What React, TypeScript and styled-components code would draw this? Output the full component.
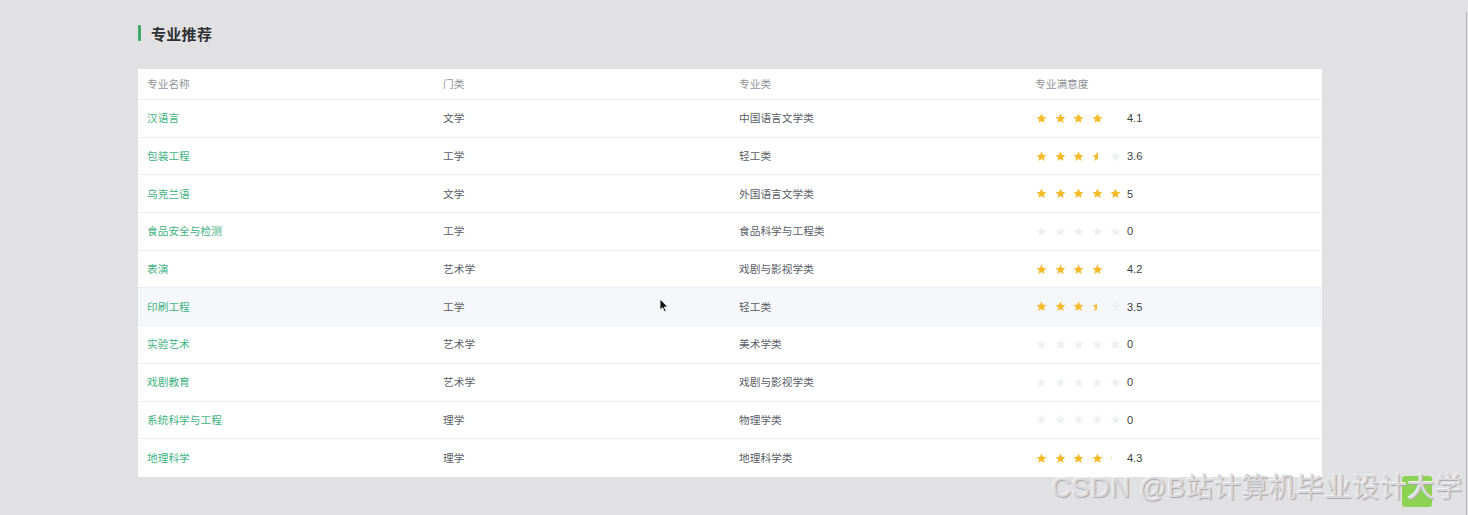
import React from "react";
import styled, { createGlobalStyle } from "styled-components";

const GlobalStyle = createGlobalStyle`
  html, body { margin: 0; padding: 0; }
  body {
    background: #e1e0e2;
    font-family: "Liberation Sans", "Noto Sans CJK SC", sans-serif;
    width: 1468px;
    height: 515px;
    overflow: hidden;
  }
`;

const Page = styled.div`
  position: relative;
  width: 1468px;
  height: 515px;
  box-sizing: border-box;
  padding: 25px 146px 0 138px;
`;

const TitleRow = styled.div`
  display: flex;
  align-items: center;
  gap: 10px;
  height: 16px;
  margin-bottom: 28px;
`;

const TitleBar = styled.span`
  display: block;
  width: 3px;
  height: 16px;
  background: #3daa6c;
  border-radius: 1px;
`;

const TitleText = styled.h2`
  margin: 0;
  font-size: 15px;
  font-weight: 700;
  color: #303133;
  letter-spacing: 0.3px;
`;

const Table = styled.div`
  background: #fff;
  width: 1184px;
`;

const Row = styled.div<{ $head?: boolean; $hover?: boolean }>`
  display: grid;
  grid-template-columns: repeat(4, 1fr);
  align-items: center;
  height: ${(p) => (p.$head ? "31px" : "37.7px")};
  box-sizing: border-box;
  border-bottom: 1px solid #ebeef5;
  background: ${(p) => (p.$hover ? "#f5f7fa" : "#fff")};
  &:last-child { border-bottom: none; }
`;

const Cell = styled.div<{ $tone?: "head" | "name" | "body" }>`
  padding-left: 9px;
  font-size: 10.7px;
  line-height: 14px;
  white-space: nowrap;
  color: ${(p) =>
    p.$tone === "head" ? "#909399" : p.$tone === "name" ? "#3fb37f" : "#5a5e66"};
`;

const RateWrap = styled.div`
  display: flex;
  align-items: center;
  padding-left: 10px;
`;

const StarBox = styled.span`
  position: relative;
  display: inline-block;
  width: 11px;
  height: 11px;
  margin-right: 7.6px;
`;

const StarClip = styled.span`
  position: absolute;
  left: 0;
  top: 0;
  height: 11px;
  overflow: hidden;
`;

const Score = styled.span`
  font-size: 11px;
  color: #3c3f44;
  margin-left: -2px;
`;

const StarSvg = ({ color }: { color: string }) => (
  <svg width="11" height="11" viewBox="0 0 24 24" style={{ display: "block" }}>
    <path
      d="M12 1.2l3.2 7.1 7.6.7-5.8 5.1 1.8 7.6L12 17.7l-6.8 4 1.8-7.6L1.2 9l7.6-.7z"
      fill={color}
    />
  </svg>
);

const Rate = ({ value }: { value: number }) => {
  const stars = [0, 1, 2, 3, 4].map((i) => {
    const fill = Math.max(0, Math.min(1, value - i));
    if (fill >= 1)
      return (
        <StarBox key={i}>
          <StarSvg color="#f7ba2a" />
        </StarBox>
      );
    if (fill > 0) {
      const shown = fill >= 0.5 ? fill : Math.max(0, fill - 0.15);
      return (
        <StarBox key={i}>
          <StarClip style={{ width: `${shown * 11}px` }}>
            <StarSvg color="#f7ba2a" />
          </StarClip>
        </StarBox>
      );
    }
    return (
      <StarBox key={i}>
        <StarSvg color="#eff0f4" />
      </StarBox>
    );
  });
  return (
    <RateWrap>
      {stars}
      <Score>{value}</Score>
    </RateWrap>
  );
};

const Watermark = styled.div`
  position: absolute;
  right: 5px;
  bottom: 10px;
  font-size: 27px;
  letter-spacing: 0.7px;
  color: #d9d8db;
  text-shadow: 1px 1px 1px #a9a8ab, -1px -1px 0 #f4f4f5;
  white-space: nowrap;
  font-family: "Liberation Sans", "Noto Sans CJK SC", sans-serif;
`;

const GreenBadge = styled.span`
  position: absolute;
  right: 36px;
  bottom: 8px;
  width: 30px;
  height: 31px;
  border-radius: 3px;
  background: #8ed254;
`;

const EdgeLine = styled.span`
  position: absolute;
  right: 1px;
  top: 12px;
  bottom: 0;
  width: 1px;
  background: #b9b8bb;
`;

const Cursor = styled.svg`
  position: absolute;
  left: 659px;
  top: 298px;
`;

const rows = [
  ["汉语言", "文学", "中国语言文学类", 4.1],
  ["包装工程", "工学", "轻工类", 3.6],
  ["乌克兰语", "文学", "外国语言文学类", 5],
  ["食品安全与检测", "工学", "食品科学与工程类", 0],
  ["表演", "艺术学", "戏剧与影视学类", 4.2],
  ["印刷工程", "工学", "轻工类", 3.5],
  ["实验艺术", "艺术学", "美术学类", 0],
  ["戏剧教育", "艺术学", "戏剧与影视学类", 0],
  ["系统科学与工程", "理学", "物理学类", 0],
  ["地理科学", "理学", "地理科学类", 4.3],
] as const;

export default function App() {
  return (
    <>
      <GlobalStyle />
      <Page>
        <TitleRow>
          <TitleBar />
          <TitleText>专业推荐</TitleText>
        </TitleRow>
        <Table>
          <Row $head>
            <Cell $tone="head">专业名称</Cell>
            <Cell $tone="head">门类</Cell>
            <Cell $tone="head">专业类</Cell>
            <Cell $tone="head">专业满意度</Cell>
          </Row>
          {rows.map((r, idx) => (
            <Row key={r[0]} $hover={idx === 5}>
              <Cell $tone="name">{r[0]}</Cell>
              <Cell $tone="body">{r[1]}</Cell>
              <Cell $tone="body">{r[2]}</Cell>
              <Rate value={r[3]} />
            </Row>
          ))}
        </Table>
        <GreenBadge />
        <Watermark>CSDN @B站计算机毕业设计大学</Watermark>
        <EdgeLine />
        <Cursor width="10" height="15" viewBox="0 0 10 15">
          <path d="M1 1 L1 12 L3.6 9.6 L5.6 14 L7.2 13.3 L5.3 9 L8.8 9 Z" fill="#111" stroke="#fff" strokeWidth="0.8" />
        </Cursor>
      </Page>
    </>
  );
}
